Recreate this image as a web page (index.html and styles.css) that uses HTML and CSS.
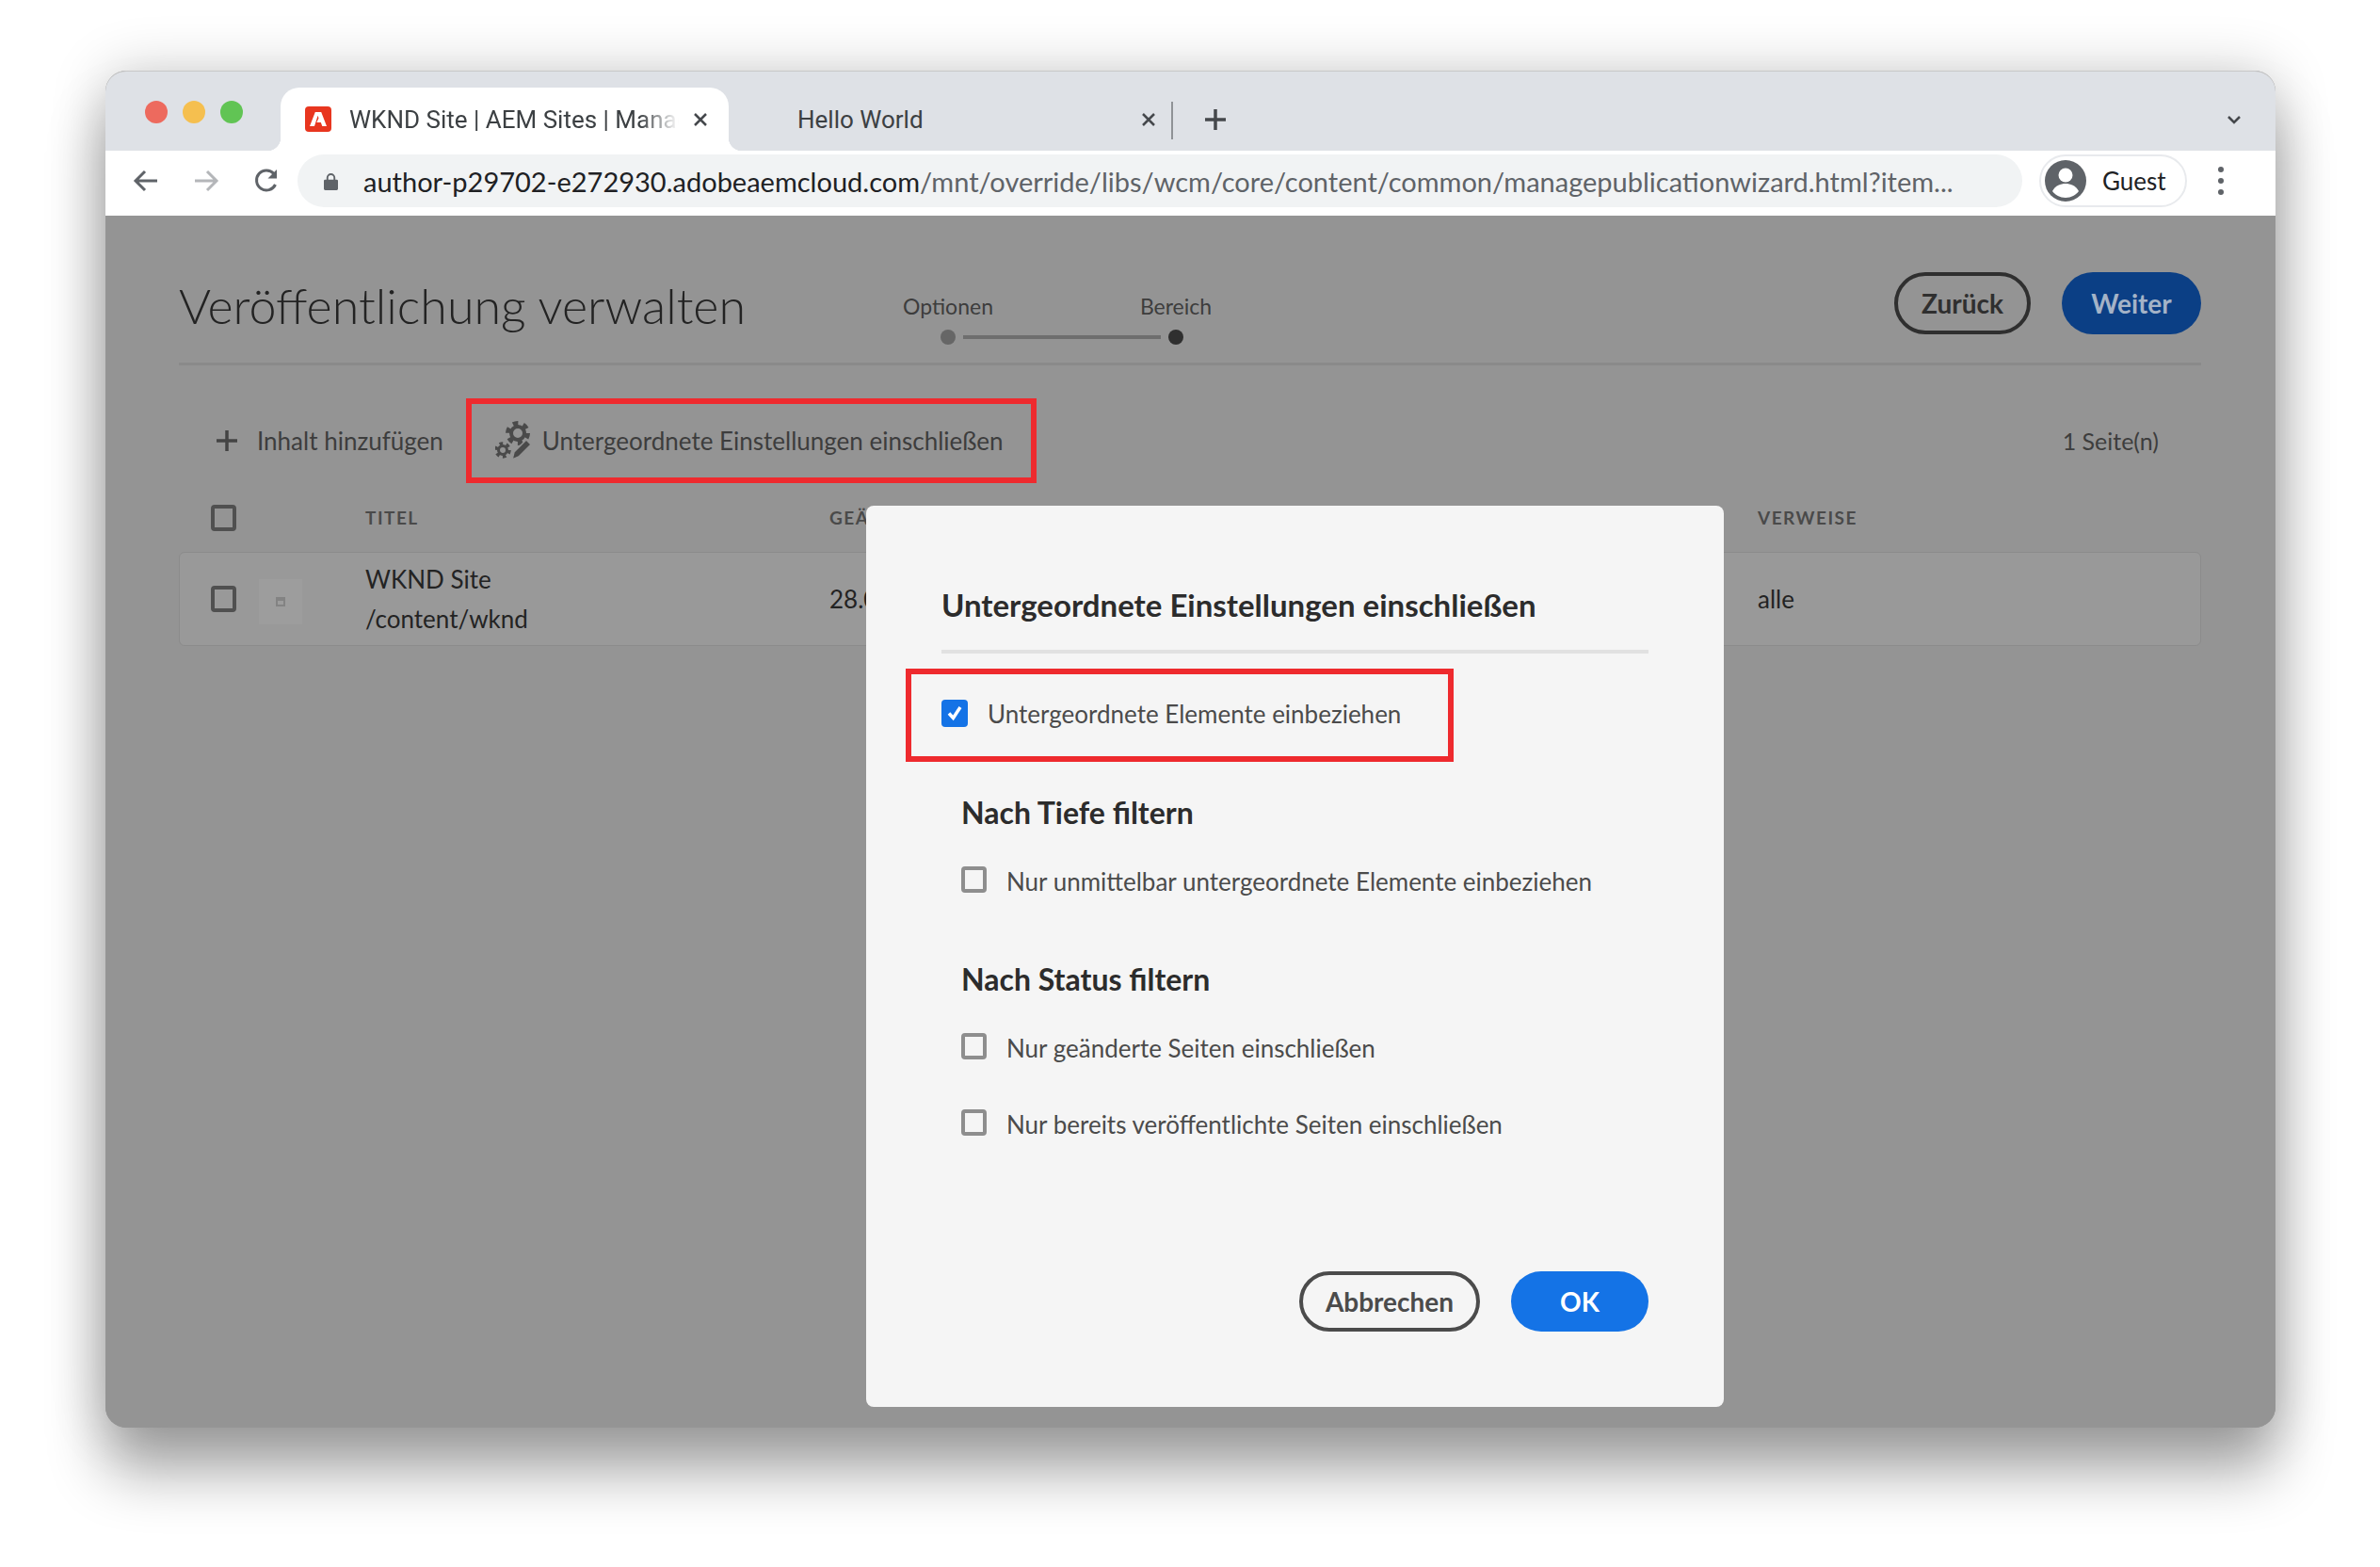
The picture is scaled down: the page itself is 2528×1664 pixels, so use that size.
FILE: index.html
```html
<!DOCTYPE html>
<html lang="de">
    <head>
        <meta charset="UTF-8" />
        <title>Veröffentlichung verwalten</title>
        <link rel="stylesheet" href="styles.css">
    </head>
    <body>
        <div class="window">
            <div class="tabstrip">
                <div class="lights">
                    <span class="light red"></span>
                    <span class="light yellow"></span>
                    <span class="light green"></span>
                </div>
                <div class="tab active">
                    <svg class="favicon" viewBox="0 0 28 27">
                        <rect width="28" height="27" rx="4" fill="#e8361f" />
                        <path d="M10.8 6h6.4L23 21h-4.7l-1.5-3.9h-4.5l2.2-4.6 -0.9-2.7L10 21H5z" fill="#fff" />
                    </svg>
                    <span class="tab-title fade">WKND Site | AEM Sites | Manage</span>
                    <svg class="tab-close" viewBox="0 0 16 16"><path d="M2 2l12 12M14 2L2 14" /></svg>
                </div>
                <div class="tab">
                    <span class="tab-title">Hello World</span>
                    <svg class="tab-close" viewBox="0 0 16 16"><path d="M2 2l12 12M14 2L2 14" /></svg>
                </div>
                <span class="tab-sep"></span>
                <svg class="new-tab" viewBox="0 0 24 24"><path d="M12 1v22M1 12h22" /></svg>
                <svg class="tab-menu" viewBox="0 0 16 10"><path d="M2 2l6 6 6-6" /></svg>
            </div>

            <div class="toolbar">
                <svg class="nav-icon back" viewBox="0 0 28 28"><path d="M26 14H4M13 4L3 14l10 10" /></svg>
                <svg class="nav-icon forward" viewBox="0 0 28 28"><path d="M2 14h22M15 4l10 10-10 10" /></svg>
                <svg class="nav-icon reload" viewBox="0 0 28 28"><path d="M23.5 18a10.5 10.5 0 1 1-1.6-11.5" /><path class="solid" d="M25 2v9.5h-9.5z" /></svg>
                <div class="omnibox">
                    <svg class="lock" viewBox="0 0 16 20"><path d="M3 8V6a5 5 0 0 1 10 0v2h1.5A1.5 1.5 0 0 1 16 9.500V18.500A1.500 1.500 0 0 1 14.500 20h-13A1.500 1.500 0 0 1 0 18.500V9.500A1.500 1.500 0 0 1 1.500 8zm2 0h6V6a3 3 0 0 0-6 0z" /></svg>
                    <span class="url"><b>author-p29702-e272930.adobeaemcloud.com</b>/mnt/override/libs/wcm/core/content/common/managepublicationwizard.html?item...</span>
                </div>
                <div class="profile">
                    <svg class="avatar" viewBox="0 0 44 44">
                        <circle cx="22" cy="22" r="22" fill="#5f6368" />
                        <circle cx="22" cy="16" r="7.500" fill="#fff" />
                        <path d="M8 33c3-6 9-8 14-8s11 2 14 8c-3 4-8 7-14 7s-11-3-14-7z" fill="#fff" />
                    </svg>
                    <span>Guest</span>
                </div>
                <div class="kebab"><i></i><i></i><i></i></div>
            </div>

            <div class="page">
                <div class="page-head">
                    <h1>Veröffentlichung verwalten</h1>
                    <div class="stepper">
                        <div class="step-labels"><span>Optionen</span><span>Bereich</span></div>
                        <div class="step-track">
                            <span class="dot"></span>
                            <span class="track-line"></span>
                            <span class="dot current"></span>
                        </div>
                    </div>
                    <div class="head-actions">
                        <button class="btn outline dim">Zurück</button>
                        <button class="btn primary dim">Weiter</button>
                    </div>
                </div>

                <div class="actionbar">
                    <svg class="plus" viewBox="0 0 26 26"><path d="M13 2v22M2 13h22" /></svg>
                    <span class="add-label">Inhalt hinzufügen</span>
                    <div class="callout action-callout">
                        <svg class="gears" viewBox="0 0 40 42">
                            <circle class="teeth" cx="24" cy="13" r="10.500" />
                            <circle class="ring" cx="24" cy="13" r="7" />
                            <circle class="teeth small" cx="8" cy="31" r="7" />
                            <circle class="ring small" cx="8" cy="31" r="4.500" />
                            <path d="M33 20l5 5-13 13-7 3 2-8z" fill="#4a4a4a" stroke="#949494" stroke-width="1.500" />
                        </svg>
                        <span>Untergeordnete Einstellungen einschließen</span>
                    </div>
                    <span class="page-count">1 Seite(n)</span>
                </div>

                <div class="table-head">
                    <span class="box dark"></span>
                    <span></span>
                    <span>TITEL</span>
                    <span>GEÄNDERT</span>
                    <span>VERWEISE</span>
                </div>
                <div class="table-row">
                    <span class="box dark"></span>
                    <span class="thumb"><i></i></span>
                    <div class="row-title">WKND Site<br />/content/wknd</div>
                    <span>28.09.2021</span>
                    <span>alle</span>
                </div>

                <div class="dialog">
                    <h2>Untergeordnete Einstellungen einschließen</h2>
                    <div class="callout dialog-callout">
                        <span class="box checked">
                            <svg viewBox="0 0 28 28"><path d="M8 14.500l4.500 5L20 8" /></svg>
                        </span>
                        <span>Untergeordnete Elemente einbeziehen</span>
                    </div>
                    <div class="filters">
                        <h3>Nach Tiefe filtern</h3>
                        <label class="option"><span class="box"></span><span>Nur unmittelbar untergeordnete Elemente einbeziehen</span></label>
                        <h3 class="second">Nach Status filtern</h3>
                        <label class="option"><span class="box"></span><span>Nur geänderte Seiten einschließen</span></label>
                        <label class="option last"><span class="box"></span><span>Nur bereits veröffentlichte Seiten einschließen</span></label>
                    </div>
                    <div class="dialog-actions">
                        <button class="btn outline cancel">Abbrechen</button>
                        <button class="btn primary ok">OK</button>
                    </div>
                </div>
            </div>
        </div>
    </body>
</html>
```

FILE: styles.css
```css
* {
    box-sizing: border-box;
}

body {
    margin: 0;
    height: 1664px;
    padding: 75px 0 0 112px;
    background-color: #fff;
    overflow: hidden;
    font-family: "Lato", "Liberation Sans", sans-serif;
}

.window {
    width: 2305px;
    height: 1441px;
    display: flex;
    flex-direction: column;
    border-radius: 22px;
    box-shadow: 0 48px 62px rgba(0, 0, 0, 0.33), 0 0 60px rgba(0, 0, 0, 0.2);
    background-color: #949494;
}

/* tabs */
.tabstrip {
    height: 85px;
    display: flex;
    padding-top: 17px;
    background-color: #dee1e6;
    border-top: 1px solid #c8c8c8;
    border-radius: 22px 22px 0 0;
    font-family: "Roboto", sans-serif;
}

.lights {
    display: flex;
    gap: 16px;
    margin: 14px 0 0 42px;
}

.light {
    width: 24px;
    height: 24px;
    border-radius: 50%;
}

.red { background-color: #ed6a5e; }
.yellow { background-color: #f5bf4f; }
.green { background-color: #61c454; }

.tab {
    width: 476px;
    height: 67px;
    display: flex;
    align-items: center;
    position: relative;
    padding: 0 22px 0 26px;
    border-radius: 20px 20px 0 0;
    font-size: 26px;
    color: #3c4043;
}

.tab.active {
    margin-left: 40px;
    background-color: #fff;
}

.tab.active::before,
.tab.active::after {
    content: "";
    position: absolute;
    bottom: 0;
    width: 14px;
    height: 14px;
    background: radial-gradient(circle at 0 0, #dee1e6 14px, #fff 14.500px);
}

.tab.active::before {
    left: -14px;
}

.tab.active::after {
    right: -14px;
    transform: scaleX(-1);
}

.favicon {
    width: 28px;
    height: 27px;
    flex: none;
    margin-right: 19px;
}

.tab-title {
    flex: 1;
    white-space: nowrap;
    overflow: hidden;
}

.tab-title.fade {
    -webkit-mask-image: linear-gradient(to right, #000 88%, transparent 100%);
    mask-image: linear-gradient(to right, #000 88%, transparent 100%);
}

.tab + .tab .tab-title {
    padding-left: 47px;
}

.tab-close {
    width: 16px;
    height: 16px;
    flex: none;
    margin-left: 15px;
    fill: none;
    stroke: #45484c;
    stroke-width: 2.500;
}

.tab-sep {
    width: 2px;
    height: 40px;
    margin: 15px 0 0 -6px;
    background-color: #8f9296;
}

.new-tab {
    width: 24px;
    height: 24px;
    margin: 22px 0 0 33px;
    fill: none;
    stroke: #45484c;
    stroke-width: 3.500;
}

.tab-menu {
    width: 16px;
    height: 10px;
    margin: 29px 0 0 auto;
    margin-right: 36px;
    fill: none;
    stroke: #45484c;
    stroke-width: 2.500;
}

/* address bar */
.toolbar {
    height: 69px;
    display: flex;
    align-items: center;
    padding: 0 0 5px 29px;
    background-color: #fff;
}

.nav-icon {
    width: 28px;
    height: 28px;
    margin-right: 36px;
    fill: none;
    stroke: #5f6368;
    stroke-width: 3;
}

.forward {
    stroke: #b4b6b9;
}

.reload {
    margin-right: 0;
}

.reload .solid {
    fill: #5f6368;
    stroke: none;
}

.omnibox {
    width: 1832px;
    height: 56px;
    display: flex;
    align-items: center;
    margin-left: 19px;
    padding-left: 28px;
    border-radius: 28px;
    background-color: #f1f3f4;
}

.lock {
    width: 15px;
    height: 19px;
    margin-right: 27px;
    fill: #5f6368;
}

.url {
    font-size: 29px;
    white-space: nowrap;
    color: #5f6368;
}

.url b {
    font-weight: 400;
    color: #202124;
}

.profile {
    width: 157px;
    height: 56px;
    display: flex;
    align-items: center;
    margin-left: 18px;
    padding-left: 4px;
    border: 2px solid #e8eaed;
    border-radius: 28px;
    font-size: 26px;
    color: #202124;
}

.avatar {
    width: 44px;
    height: 44px;
    margin-right: 17px;
}

.kebab {
    display: flex;
    flex-direction: column;
    gap: 6px;
    margin-left: 33px;
}

.kebab i {
    width: 6px;
    height: 6px;
    border-radius: 50%;
    background-color: #5f6368;
}

/* page behind the dialog */
.page {
    flex: 1;
    position: relative;
    padding: 0 79px 0 78px;
    border-radius: 0 0 22px 22px;
    overflow: hidden;
    background-color: #949494;
    color: #2f2f2f;
}

.page-head {
    height: 159px;
    display: flex;
    border-bottom: 3px solid #8a8a8a;
}

h1 {
    width: 767px;
    margin: 60px 0 0;
    font-size: 52px;
    line-height: 70px;
    font-weight: 300;
    white-space: nowrap;
    color: #232323;
}

.stepper {
    width: 342px;
    padding-top: 82px;
    font-size: 23px;
    color: #3d3d3d;
}

.step-labels {
    display: flex;
    justify-content: space-between;
    height: 28px;
    line-height: 28px;
    text-align: center;
}

.step-labels span {
    width: 100px;
}

.step-track {
    display: flex;
    align-items: center;
    margin-top: 11px;
    padding: 0 42px;
}

.dot {
    width: 16px;
    height: 16px;
    border-radius: 50%;
    background-color: #666;
}

.dot.current {
    background-color: #2f2f2f;
}

.track-line {
    flex: 1;
    height: 4px;
    margin: 0 8px;
    background-color: #6e6e6e;
}

.head-actions {
    display: flex;
    gap: 33px;
    margin: 60px 0 0 auto;
}

.btn {
    height: 66px;
    padding: 0;
    border-radius: 33px;
    font-family: inherit;
    font-size: 28px;
    font-weight: 700;
}

.btn.outline {
    border: 4px solid #4b4b4b;
    background-color: transparent;
    color: #4b4b4b;
}

.btn.primary {
    border: 0;
    background-color: #1473e6;
    color: #fff;
}

.btn.outline.dim {
    width: 145px;
    border-color: #2f2f2f;
    color: #2f2f2f;
}

.btn.primary.dim {
    width: 148px;
    background-color: #0b3f85;
    color: #a4b3c7;
}

.actionbar {
    height: 90px;
    display: flex;
    align-items: center;
    margin-top: 35px;
    font-size: 26px;
    color: #3d3d3d;
}

.plus {
    width: 26px;
    height: 26px;
    margin-left: 38px;
    fill: none;
    stroke: #444;
    stroke-width: 3.500;
}

.add-label {
    margin-left: 19px;
}

.callout {
    display: flex;
    align-items: center;
    border: 6px solid #ee2a2e;
}

.action-callout {
    width: 606px;
    height: 90px;
    margin-left: 24px;
    padding-left: 25px;
}

.gears {
    width: 40px;
    height: 42px;
    margin-right: 10px;
    fill: none;
}

.teeth {
    stroke: #4a4a4a;
    stroke-width: 5;
    stroke-dasharray: 5.500 5.500;
}

.teeth.small {
    stroke-width: 3.500;
    stroke-dasharray: 3.660 3.670;
}

.ring {
    stroke: #4a4a4a;
    stroke-width: 4;
}

.ring.small {
    stroke-width: 3;
}

.page-count {
    margin-left: auto;
    padding-right: 45px;
    font-size: 25px;
}

.table-head,
.table-row {
    display: grid;
    grid-template-columns: 51px 113px 493px 986px 1fr;
    align-items: center;
    padding-left: 34px;
}

.table-head {
    height: 73px;
    font-size: 19px;
    font-weight: 700;
    letter-spacing: 1.500px;
    color: #4a4a4a;
}

.table-row {
    height: 100px;
    padding-left: 33px;
    border: 1px solid #8b8b8b;
    border-radius: 6px;
    background-color: #999;
    font-size: 26px;
    color: #232323;
}

.row-title {
    line-height: 42px;
}

.box {
    width: 27px;
    height: 28px;
    display: block;
    border: 4px solid #8e8e8e;
    border-radius: 4px;
    background-color: #f5f5f5;
}

.box.dark {
    border-color: #505050;
    background-color: transparent;
}

.box.checked {
    border: 0;
    background-color: #1473e6;
}

.box.checked svg {
    display: block;
    fill: none;
    stroke: #fff;
    stroke-width: 3.500;
}

.thumb {
    width: 46px;
    height: 48px;
    display: flex;
    align-items: center;
    justify-content: center;
    margin-top: 6px;
    background-color: #9d9d9d;
}

.thumb i {
    width: 10px;
    height: 10px;
    border: 2px solid #838383;
    border-top-width: 4px;
}

/* dialog */
.dialog {
    position: absolute;
    left: 808px;
    top: 308px;
    width: 911px;
    height: 957px;
    display: flex;
    flex-direction: column;
    padding: 83px 80px 80px;
    border-radius: 8px;
    background-color: #f5f5f5;
    color: #4b4b4b;
    font-size: 26px;
}

h2 {
    height: 74px;
    margin: 0;
    border-bottom: 4px solid #e1e1e1;
    font-size: 33px;
    line-height: 44px;
    font-weight: 700;
    white-space: nowrap;
    color: #2c2c2c;
}

.dialog-callout {
    width: 582px;
    height: 99px;
    margin: 16px 0 0 -38px;
    padding-left: 32px;
    padding-bottom: 4px;
}

.dialog-callout .box {
    width: 28px;
    height: 29px;
    margin-right: 21px;
}

.filters {
    margin-left: 21px;
}

h3 {
    margin: 32px 0 0;
    font-size: 32px;
    line-height: 44px;
    font-weight: 700;
    color: #2c2c2c;
}

h3.second {
    margin-top: 70px;
}

.option {
    height: 28px;
    display: flex;
    align-items: center;
    gap: 21px;
    margin-top: 35px;
    white-space: nowrap;
}

.option .box {
    flex: none;
}

.option span + span {
    padding-top: 4px;
}

.option.last {
    margin-top: 53px;
}

.dialog-actions {
    display: flex;
    justify-content: flex-end;
    gap: 33px;
    margin-top: auto;
}

.btn.cancel {
    width: 192px;
    height: 64px;
}

.btn.ok {
    width: 146px;
    height: 64px;
}
```
